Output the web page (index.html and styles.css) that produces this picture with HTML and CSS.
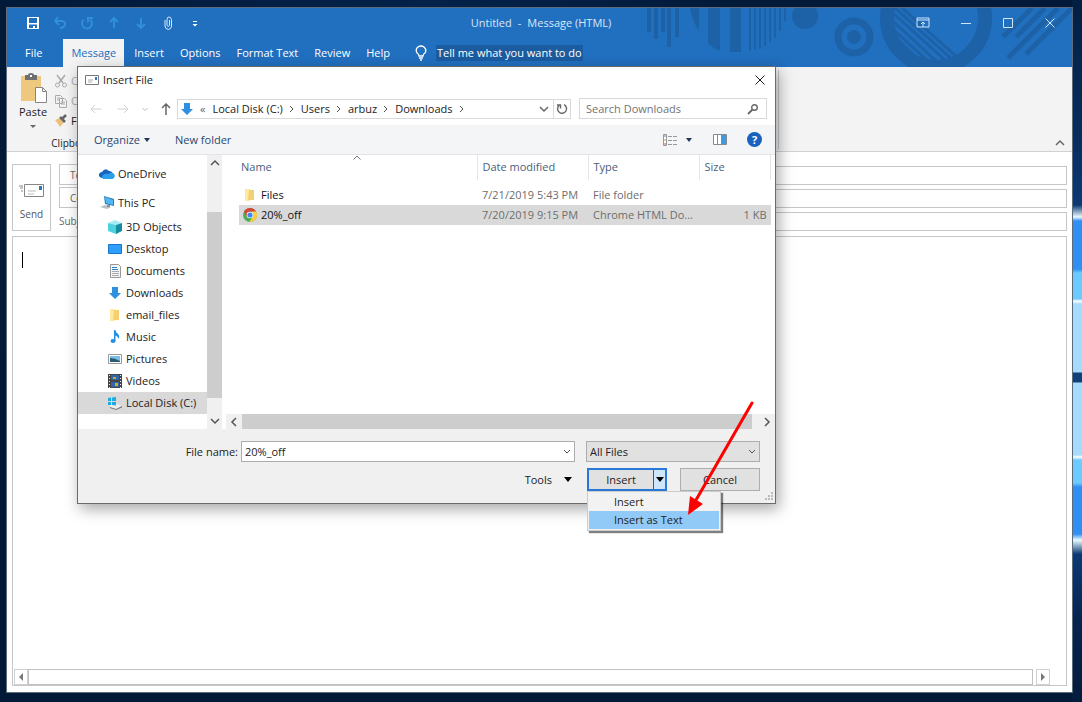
FILE: index.html
```html
<!DOCTYPE html>
<html lang="en">

<head>
    <meta charset="UTF-8" />
    <meta name="viewport" content="width=device-width, initial-scale=1.0" />
    <title>Untitled - Message (HTML)</title>
    <link rel="stylesheet" href="styles.css">
</head>

<body>
    <div class="window">
        <header class="header">
            <!-- Title bar pattern -->
            <svg class="header-art" width="432" height="60" viewBox="640 7 432 60" fill="#1d62a7">
                <path d="M647 7h4v24h-4zM654 7h4v31h-4zM661 7h4v24h-4zM667 7h4v39h-4zM675 7h4v29h-4z" />
                <path d="M690 7h9v23q-7-10-9-23zM708 7h12v43q-6-2-12-8zM730 7h11v44h-11z" />
                <path d="M749 7h2v43h-2zM754 7h2v42h-2zM759 7h2v41h-2zM764 7h2v38h-2zM769 7h2v34h-2zM774 7h2v30h-2zM779 7h2v23h-2zM784 7h2v13h-2z" />
                <circle cx="805" cy="15" r="13" />
                <circle cx="854" cy="36" r="16" fill="none" stroke="#1d62a7" stroke-width="7" />
                <circle cx="854" cy="36" r="7" />
                <circle cx="936" cy="17" r="49" fill="none" stroke="#1d62a7" stroke-width="14" />
                <path d="M894 13l52 47M894 21l43 40M896 31l34 31M899 40l22 21M895 7l60 54M902 7l56 50" stroke="#1d62a7" stroke-width="3" />
                <path d="M1003 36l29-29M1016 36l29-29M1008 57l50-50M1026 53l46-46" stroke="#1d62a7" stroke-width="5" />
            </svg>
            <div class="titlebar">
                <div class="quick-access">
                    <button aria-label="Save"><svg width="14" height="14" viewBox="0 0 14 14"><path d="M1 1h12v12H1zM3 2h8v5H3zM3 8.500h8V12H9v-2H7v2H3z" fill="#fff" fill-rule="evenodd" /></svg></button>
                    <button class="dim" aria-label="Undo"><svg width="14" height="14" viewBox="0 0 14 14"><path d="M5 1L2 5l4 4M2 5h6q5 0 4 4-1 3-5 3" /></svg></button>
                    <button class="dim" aria-label="Redo"><svg width="14" height="14" viewBox="0 0 14 14"><path d="M4 3.500A5 5 0 1 0 10 3.500M8 6.500V2h5" /></svg></button>
                    <button class="dim" aria-label="Previous"><svg width="14" height="14" viewBox="0 0 14 14"><path d="M7 12V2M3 6l4-4 4 4" /></svg></button>
                    <button class="dim" aria-label="Next"><svg width="14" height="14" viewBox="0 0 14 14"><path d="M7 2v10M3 8l4 4 4-4" /></svg></button>
                    <button aria-label="Attach file"><svg width="14" height="14" viewBox="0 0 14 14"><path d="M8.500 4v5.500q-1.500 2-2.500 0V3.500Q6 1 8 1t2.500 2.500V10q0 3-3 3.500Q4 13 4 10V4" fill="none" stroke="#dbe9f7" /></svg></button>
                    <button aria-label="Customize toolbar"><svg width="14" height="14" viewBox="0 0 14 14"><path d="M5 5h4v1H5zM4.500 8h5L7 10.500z" fill="#fff" /></svg></button>
                </div>
                <div class="window-title"><span>Untitled</span><span>-</span><span>Message (HTML)</span></div>
                <div class="window-controls">
                    <button aria-label="Ribbon display options"><svg width="14" height="12" viewBox="0 0 14 12"><path d="M1 1h12v9H1zM1 3h12M7 10V5M5 7l2-2 2 2" /></svg></button>
                    <button aria-label="Minimize"><svg width="12" height="12" viewBox="0 0 12 12"><path d="M1 6.500h10" /></svg></button>
                    <button aria-label="Maximize"><svg width="12" height="12" viewBox="0 0 12 12"><path d="M1.500 1.500h9v9h-9z" /></svg></button>
                    <button aria-label="Close window"><svg width="12" height="12" viewBox="0 0 12 12"><path d="M1.500 1.500l9 9M10.500 1.500l-9 9" /></svg></button>
                </div>
            </div>
            <nav class="tabs">
                <a href="#" class="tab tab-file">File</a>
                <a href="#" class="tab active">Message</a>
                <a href="#" class="tab">Insert</a>
                <a href="#" class="tab">Options</a>
                <a href="#" class="tab">Format Text</a>
                <a href="#" class="tab">Review</a>
                <a href="#" class="tab">Help</a>
                <svg class="bulb" width="12" height="16" viewBox="0 0 12 16" fill="none" stroke="#fff" stroke-width="1.300"><path d="M4 11Q4 9 2 8 0 4 3 2 6 0 9 2q3 3 1 6-2 1-2 3zM4 13h4M5 15h2" /></svg>
                <a href="#" class="tell-me">Tell me what you want to do</a>
            </nav>
        </header>

        <section class="ribbon">
            <div class="ribbon-groups">
                <div class="clipboard">
                    <div class="clipboard-tools">
                        <button class="paste">
                            <svg width="28" height="30" viewBox="0 0 28 30"><path d="M2 3h20v25H2z" fill="#edc87e" /><path d="M6 2h3q0-2 3-2t3 2h3v5H6z" fill="#6f6f6f" /><path d="M11 2h2v2h-2z" fill="#fff" /><path d="M16.500 14.500h7l4 4v11h-11zM23.500 14.500v4h4" fill="#fff" stroke="#868686" /></svg>
                            <span>Paste</span>
                            <svg width="6" height="4" viewBox="0 0 6 4"><path d="M0 0h6L3 3z" fill="#666" /></svg>
                        </button>
                        <div class="clipboard-list">
                            <button class="disabled"><svg width="14" height="14" viewBox="0 0 14 14" fill="none" stroke="#aaa"><path d="M3 1l6 8M11 1L5 9" stroke-width="1.500" /><circle cx="3.500" cy="11" r="2" /><circle cx="10.500" cy="11" r="2" /></svg>Cut</button>
                            <button class="disabled"><svg width="14" height="14" viewBox="0 0 14 14" fill="#f3f3f3" stroke="#aaa"><path d="M1.500 1.500h5l2 2v6h-7zM5.500 4.500h5l2 2v7h-7zM7 8h4M7 10h4M3 4h3M3 6h2" /></svg>Copy</button>
                            <button><svg width="14" height="14" viewBox="0 0 14 14"><path d="M1 6l5-2 4 4-4 5-2-3z" fill="#edc07a" /><path d="M6 3l5 5M8 5l4-4" stroke="#666" stroke-width="2.500" /></svg>Format Painter</button>
                        </div>
                    </div>
                    <div class="group-name">Clipboard</div>
                </div>
            </div>
            <button class="collapse" aria-label="Collapse the ribbon"><svg width="10" height="8" viewBox="0 0 10 8"><path d="M1 6l4-4 4 4" fill="none" stroke="#666" stroke-width="1.500" /></svg></button>
        </section>

        <main class="compose">
            <div class="address">
                <button class="send">
                    <svg width="26" height="15" viewBox="0 0 26 15"><path d="M5.500 1.500h19v12h-19z" fill="#fff" stroke="#868686" /><path d="M20 3h3v4h-3z" fill="#3178ba" /><path d="M9 8h8M9 11h6" stroke="#bbb" /><path d="M0 3h4M1 5h3M2 8h2" stroke="#888" /></svg>
                    Send
                </button>
                <div class="fields">
                    <div class="field"><button>To</button><input type="text" aria-label="To"></div>
                    <div class="field"><button>Cc</button><input type="text" aria-label="Cc"></div>
                    <div class="field"><label for="subject">Subject</label><input type="text" id="subject"></div>
                </div>
            </div>
            <div class="message">
                <span class="caret"></span>
                <textarea aria-label="Message body"></textarea>
                <div class="message-scroll">
                    <button aria-label="Scroll message left"><svg width="6" height="8" viewBox="0 0 6 8"><path d="M5 0v8L1 4z" fill="#777" /></svg></button>
                    <div class="message-track"></div>
                    <button aria-label="Scroll message right"><svg width="6" height="8" viewBox="0 0 6 8"><path d="M1 0v8l4-4z" fill="#777" /></svg></button>
                </div>
            </div>
        </main>
    </div>

    <!-- Insert File dialog -->
    <div class="dialog" role="dialog" aria-labelledby="dialogTitle">
        <div class="dialog-title">
            <svg width="14" height="10" viewBox="0 0 14 10"><path d="M.5.500h13v9H.5z" fill="#fff" stroke="#777" /><path d="M10 2h2v3h-2z" fill="#3178ba" /><path d="M3 5h5M3 7h4" stroke="#aaa" /></svg>
            <span id="dialogTitle">Insert File</span>
            <button aria-label="Close"><svg width="10" height="10" viewBox="0 0 10 10"><path d="M.5.500l9 9M9.500.500l-9 9" stroke="#222" /></svg></button>
        </div>

        <div class="dialog-nav">
            <div class="history">
                <button aria-label="Back"><svg width="12" height="12" viewBox="0 0 12 12"><path d="M11.500 6H1M5 2L1 6l4 4" stroke="#d2d2d2" /></svg></button>
                <button aria-label="Forward"><svg width="12" height="12" viewBox="0 0 12 12"><path d="M.5 6H11M7 2l4 4-4 4" stroke="#d2d2d2" /></svg></button>
                <button aria-label="Recent locations"><svg width="6" height="12" viewBox="0 0 6 12"><path d="M.5 5L3 7.500 5.500 5" stroke="#bbb" /></svg></button>
                <button aria-label="Up"><svg width="10" height="12" viewBox="0 0 10 12"><path d="M5 12V1M1 5l4-4 4 4" stroke="#666" stroke-width="1.500" /></svg></button>
            </div>
            <div class="path">
                <svg width="14" height="14" viewBox="0 0 14 14"><path d="M4 1h6v6h3l-6 6-6-6h3z" fill="#2f8fe0" /></svg>
                <span class="path-more">«</span>
                <a href="#">Local Disk (C:)</a>
                <svg class="sep" width="6" height="8" viewBox="0 0 6 8"><path d="M1 1l3 3-3 3" /></svg>
                <a href="#">Users</a>
                <svg class="sep" width="6" height="8" viewBox="0 0 6 8"><path d="M1 1l3 3-3 3" /></svg>
                <a href="#">arbuz</a>
                <svg class="sep" width="6" height="8" viewBox="0 0 6 8"><path d="M1 1l3 3-3 3" /></svg>
                <a href="#">Downloads</a>
                <svg class="sep" width="6" height="8" viewBox="0 0 6 8"><path d="M1 1l3 3-3 3" /></svg>
                <button class="path-drop" aria-label="Previous locations"><svg width="10" height="8" viewBox="0 0 10 8"><path d="M1 2l4 4 4-4" fill="none" stroke="#666" stroke-width="1.500" /></svg></button>
                <button class="path-refresh" aria-label="Refresh"><svg width="12" height="12" viewBox="0 0 12 12"><path d="M8 1.700A4.500 4.500 0 1 1 3 2.500M1 2h3.500v3.500" fill="none" stroke="#666" stroke-width="1.400" /></svg></button>
            </div>
            <div class="search">
                <input type="text" placeholder="Search Downloads" aria-label="Search Downloads">
                <svg width="12" height="12" viewBox="0 0 12 12" fill="none" stroke="#666" stroke-width="1.400"><circle cx="7.500" cy="4.500" r="2.800" /><path d="M5.500 6.500L1 11" stroke-width="1.800" /></svg>
            </div>
        </div>

        <div class="dialog-toolbar">
            <button class="organize">Organize <svg width="6" height="4" viewBox="0 0 6 4"><path d="M0 0h6L3 4z" fill="#1e395b" /></svg></button>
            <button>New folder</button>
            <div class="view-tools">
                <button class="view" aria-label="Change your view"><svg width="14" height="12" viewBox="0 0 14 12"><path d="M.5.500h3v11h-3z" fill="#fff" stroke="#999" /><path d="M1 2h2" stroke="#478dc4" /><path d="M1 6h2" stroke="#c49b47" /><path d="M1 10h2" stroke="#c8523f" /><path d="M5 2.500h4M10 2.500h4M5 6.500h4M10 6.500h4M5 10.500h4M10 10.500h4" stroke="#999" /></svg></button>
                <button class="view-more" aria-label="More views"><svg width="6" height="4" viewBox="0 0 6 4"><path d="M0 0h6L3 4z" fill="#1e395b" /></svg></button>
                <button class="preview" aria-label="Show the preview pane"><svg width="14" height="12" viewBox="0 0 14 12"><path d="M.5.500h13v10H.5zM4.500 1v9" fill="#fff" stroke="#888" /><path d="M8 1h5v9H8z" fill="#3a9be6" /></svg></button>
                <button class="help" aria-label="Get help">?</button>
            </div>
        </div>

        <div class="browser">
            <div class="sidebar">
                <a href="#" class="root"><svg width="16" height="14" viewBox="0 0 16 14"><path d="M3 11q-4-1-3-4 1-2 3-2 3-5 7-1 3 0 4 3l-7 4z" fill="#1565c0" /><path d="M4 12q-2-2 0-4 3-2 6-1 1-2 4-1 3 2 1 5-1 1-2 1z" fill="#2aa0ec" /></svg>OneDrive</a>
                <a href="#" class="root"><svg width="16" height="14" viewBox="0 0 16 14"><path d="M5 0l10 3v7L6 8z" fill="#2a7db8" /><path d="M6 1l8 3v5L7 7z" fill="#4eb9f5" /><path d="M1 11l5-2 6 2-4 2z" fill="#b9bec4" /><path d="M8 9h3v2H8z" fill="#8b9299" /></svg>This PC</a>
                <a href="#"><svg width="14" height="14" viewBox="0 0 14 14"><path d="M0 3l7-3 7 3-6 2z" fill="#a5edf3" /><path d="M0 3l8 2v9l-8-3z" fill="#4fd0dd" /><path d="M8 5l6-2v8l-6 3z" fill="#148da3" /></svg>3D Objects</a>
                <a href="#"><svg width="14" height="14" viewBox="0 0 14 14"><path d="M.5 2.500h13v9H.5z" fill="#2f9dfa" stroke="#1776ca" /></svg>Desktop</a>
                <a href="#"><svg width="14" height="14" viewBox="0 0 14 14"><path d="M2.500.500h8l2 2v11h-10z" fill="#f5f5f5" stroke="#999" /><path d="M4 3.500h5M4 5.500h6" stroke="#2688c9" /><path d="M4 7.500h7M4 9.500h7M4 11.500h7" stroke="#aaa" /></svg>Documents</a>
                <a href="#"><svg width="14" height="14" viewBox="0 0 14 14"><path d="M4 1h6v6h3l-6 6-6-6h3z" fill="#2f8fe0" /></svg>Downloads</a>
                <a href="#"><svg width="14" height="14" viewBox="0 0 14 14"><path d="M2 1h5v12H2z" fill="#ffe9a2" /><path d="M6 2h5v10H5z" fill="#f5d071" /></svg>email_files</a>
                <a href="#"><svg width="14" height="14" viewBox="0 0 14 14"><path d="M6 0h1.500q0 2.500 2.500 4 2 2 .5 5Q10 6 7.500 5.500V11H6z" fill="#2490e5" /><ellipse cx="5" cy="11" rx="2.500" ry="2" fill="#2490e5" /></svg>Music</a>
                <a href="#"><svg width="14" height="14" viewBox="0 0 14 14"><path d="M.5 2.500h13v9H.5z" fill="#fff" stroke="#999" /><path d="M2 4h10v6H2z" fill="#79bdea" /><path d="M2 6q5 0 10 3v1H2z" fill="#285c70" /></svg>Pictures</a>
                <a href="#"><svg width="14" height="14" viewBox="0 0 14 14"><path d="M0 0h14v14H0z" fill="#444" /><path d="M3 1h8v5H3zM3 8h8v5H3z" fill="#3165aa" /><path d="M5 3h3v2H5zM7 9h3v3H7z" fill="#d4a536" /><path d="M1.500 1v13M12.500 1v13" stroke="#eee" stroke-dasharray="1 2" /></svg>Videos</a>
                <a href="#" class="selected"><svg width="14" height="14" viewBox="0 0 14 14"><path d="M2 9l7-1 5 2-6 3-6-2z" fill="#eee" /><path d="M2 11l6 2 6-3v1.500L8 14l-6-2z" fill="#777" /><path d="M0 2l3-.5V5H0zM4 1.400L8 1v4H4zM0 6h3v3H0zM4 6h4v3.500L4 9z" fill="#19ade5" /></svg>Local Disk (C:)</a>
                <a href="#" class="network" aria-label="Network"><svg width="14" height="14" viewBox="0 0 14 14"><circle cx="7" cy="7" r="6" fill="#3b9fc7" /><path d="M3 4q4-3 8 1" stroke="#b7e0ee" fill="none" /></svg></a>
            </div>
            <div class="vscroll">
                <button aria-label="Scroll up"><svg width="10" height="8" viewBox="0 0 10 8"><path d="M1 6l4-4 4 4" /></svg></button>
                <div class="vthumb"></div>
                <button aria-label="Scroll down"><svg width="10" height="8" viewBox="0 0 10 8"><path d="M1 2l4 4 4-4" /></svg></button>
            </div>
            <div class="files">
                <table>
                    <thead>
                        <tr>
                            <th class="col-name">Name<svg width="8" height="5" viewBox="0 0 8 5"><path d="M.5 4.500L4 1l3.500 3.500" fill="none" stroke="#777" /></svg></th>
                            <th class="col-date">Date modified</th>
                            <th class="col-type">Type</th>
                            <th class="col-size">Size</th>
                        </tr>
                    </thead>
                    <tbody>
                        <tr>
                            <td><div class="file"><svg width="14" height="14" viewBox="0 0 14 14"><path d="M2 1h5v12H2z" fill="#ffe9a2" /><path d="M6 2h5v10H5z" fill="#f5d071" /></svg>Files</div></td>
                            <td>7/21/2019 5:43 PM</td>
                            <td>File folder</td>
                            <td></td>
                        </tr>
                        <tr class="selected">
                            <td><div class="file"><svg width="14" height="14" viewBox="0 0 14 14"><circle cx="7" cy="7" r="7" fill="#4caf50" /><path d="M1 3.500A7 7 0 0 1 13.100 3.500H7L4 8.500z" fill="#db4437" /><path d="M13.100 3.500A7 7 0 0 1 6.500 14L10 8.500 9 3.500z" fill="#ffcd40" /><circle cx="7" cy="7" r="3.300" fill="#fff" /><circle cx="7" cy="7" r="2.600" fill="#4285f4" /></svg>20%_off</div></td>
                            <td>7/20/2019 9:15 PM</td>
                            <td>Chrome HTML Do...</td>
                            <td class="size">1 KB</td>
                        </tr>
                    </tbody>
                </table>
                <div class="hscroll">
                    <button aria-label="Scroll left"><svg width="8" height="10" viewBox="0 0 8 10"><path d="M6 1L2 5l4 4" /></svg></button>
                    <div class="hthumb"></div>
                    <button aria-label="Scroll right"><svg width="8" height="10" viewBox="0 0 8 10"><path d="M2 1l4 4-4 4" /></svg></button>
                </div>
            </div>
        </div>

        <div class="dialog-footer">
            <div class="name-row">
                <label for="fileName">File name:</label>
                <div class="combo">
                    <input type="text" id="fileName" value="20%_off">
                    <svg width="8" height="6" viewBox="0 0 8 6"><path d="M1 1l3 3 3-3" fill="none" stroke="#555" /></svg>
                </div>
                <div class="file-type">
                    <select aria-label="File type">
                        <option>All Files</option>
                    </select>
                    <svg width="8" height="6" viewBox="0 0 8 6"><path d="M1 1l3 3 3-3" fill="none" stroke="#555" /></svg>
                </div>
            </div>
            <div class="action-row">
                <button class="tools">Tools <svg width="8" height="5" viewBox="0 0 8 5"><path d="M0 0h8L4 5z" /></svg></button>
                <div class="split">
                    <button class="insert">Insert</button>
                    <button class="insert-more" aria-label="Insert options"><svg width="8" height="5" viewBox="0 0 8 5"><path d="M0 0h8L4 5z" /></svg></button>
                    <div class="insert-menu" role="menu">
                        <button role="menuitem">Insert</button>
                        <button role="menuitem" class="active">Insert as Text</button>
                    </div>
                </div>
                <button class="cancel">Cancel</button>
            </div>
            <svg class="grip" width="10" height="10" viewBox="0 0 10 10"><path d="M7 0h2v2H7zM7 3h2v2H7zM7 6h2v2H7zM4 3h2v2H4zM4 6h2v2H4zM1 6h2v2H1z" fill="#bbb" /></svg>
        </div>

        <svg class="arrow" width="70" height="118" viewBox="0 0 70 118"><path d="M65 2L9 99" stroke="#f00" stroke-width="3" stroke-linecap="round" /><path d="M1 114l2-19 13 8z" fill="#f00" /></svg>
    </div>
</body>

</html>
```

FILE: styles.css
```css
* {
    box-sizing: border-box;
}

html,
body {
    margin: 0;
    height: 100%;
}

body {
    position: relative;
    padding: 7px 9px 9px 6px;
    overflow: hidden;
    font-family: "Open Sans", "Noto Sans", sans-serif;
    font-size: 11px;
    line-height: 16px;
    color: #222;
    background:
        linear-gradient(#031f42 0, #082e5e 140px, #0b3a75 205px, #e8fbff 217px, #2e8ff5 221px, #2e8ff5 269px, #6bcbff 273px, #6bcbff 299px, #fff 301px, #a5dcfd 304px, #a5dcfd 372px, #103f7a 373px, #103f7a 382px, #a5dcfd 383px, #a5dcfd 455px, #fff 457px, #6bcbff 460px, #6bcbff 483px, #2e8ff5 487px, #2e8ff5 534px, #e8fbff 540px, #0b3a75 554px, #072450 620px, #041c3c 702px) right top / 10px 100% no-repeat,
        linear-gradient(90deg, #021a38, #04224a 40%, #031a38 70%, #03193a) top / 100% 50% no-repeat,
        #021a38;
}

button,
input,
select,
textarea {
    font: inherit;
    color: inherit;
    margin: 0;
    padding: 0;
    border: 0;
    border-radius: 0;
    background: none;
    outline: none;
}

a {
    color: inherit;
    text-decoration: none;
}

svg {
    display: block;
    flex: none;
}

.window {
    height: 100%;
    display: flex;
    flex-direction: column;
    background: #fff;
    border: 1px solid #5c6c7c;
}

/* Header */
.header {
    position: relative;
    overflow: hidden;
    background: #216fbf;
    color: #fff;
}

.header-art {
    position: absolute;
    top: 0;
    right: 0;
}

.titlebar,
.tabs {
    position: relative;
    display: flex;
    align-items: center;
}

.titlebar {
    height: 31px;
    padding-bottom: 2px;
}

.quick-access,
.window-controls {
    flex: 1;
    display: flex;
}

.quick-access {
    gap: 13px;
    padding-left: 19px;
}

.quick-access .dim svg {
    fill: none;
    stroke: #2f8fdb;
    stroke-width: 2;
}

.window-title {
    display: flex;
    gap: 6px;
    color: #d9e8f7;
}

.window-controls {
    justify-content: flex-end;
    align-items: center;
    gap: 30px;
    padding-right: 16px;
}

.window-controls svg {
    fill: none;
    stroke: #d3e6f8;
}

.tabs {
    height: 28px;
}

.tab {
    padding: 0 8px;
    line-height: 28px;
}

.tab-file {
    padding: 0 21px 0 18px;
}

.tab.active {
    margin-right: 2px;
    background: #f3f3f3;
    color: #216fbf;
}

.bulb {
    margin-left: 17px;
}

.tell-me {
    margin-left: 9px;
    background: #1b5ca0;
    padding: 0 1px;
}

/* Ribbon */
.ribbon {
    height: 85px;
    display: flex;
    justify-content: space-between;
    align-items: flex-end;
    background: #f3f3f3;
    border-bottom: 1px solid #d2d2d2;
}

.ribbon-groups {
    width: 772px;
    height: 79px;
    margin-bottom: 2px;
    border-right: 1px solid #c8c8c8;
}

.clipboard {
    width: 134px;
    padding-top: 3px;
}

.clipboard-tools {
    display: flex;
    gap: 7px;
    padding-left: 12px;
}

.paste {
    display: flex;
    flex-direction: column;
    align-items: center;
    gap: 1px;
}

.paste svg:last-child {
    margin-top: 4px;
}

.clipboard-list {
    margin-top: -2px;
}

.clipboard-list button {
    height: 20px;
    display: flex;
    align-items: center;
    gap: 3px;
    white-space: nowrap;
}

.clipboard-list .disabled {
    color: #aaa;
}

.group-name {
    padding-top: 4px;
    text-align: center;
    font-size: 10px;
}

.collapse {
    padding: 4px 7px;
}

/* Message form */
.compose {
    flex: 1;
    display: flex;
    flex-direction: column;
    gap: 5px;
    padding: 12px 5px 6px;
}

.address {
    display: flex;
    gap: 8px;
}

.send {
    width: 39px;
    height: 67px;
    display: flex;
    flex-direction: column;
    align-items: center;
    gap: 8px;
    padding-top: 18px;
    border: 1px solid #c6c6c6;
    color: #555;
    font-size: 10px;
}

.fields {
    flex: 1;
    display: flex;
    flex-direction: column;
    gap: 2px;
    font-size: 10px;
}

.field {
    height: 21px;
    display: flex;
    align-items: flex-end;
    gap: 8px;
    color: #666;
}

.field button {
    width: 48px;
    height: 21px;
    padding-left: 10px;
    text-align: left;
    border: 1px solid #c6c6c6;
}

.field label {
    width: 48px;
    line-height: 20px;
}

.field input {
    flex: 1;
    height: 19px;
    border: 1px solid #c6c6c6;
}

.message {
    position: relative;
    flex: 1;
    display: flex;
    flex-direction: column;
    border: 1px solid #c6c6c6;
}

.message textarea {
    flex: 1;
    resize: none;
    padding: 14px 10px;
}

.caret {
    position: absolute;
    top: 15px;
    left: 9px;
    width: 1px;
    height: 16px;
    background: #000;
}

.message-scroll {
    height: 16px;
    display: flex;
    padding: 0 16px 0 1px;
}

.message-scroll button {
    width: 14px;
    display: flex;
    align-items: center;
    justify-content: center;
    border: 1px solid #d0d0d0;
}

.message-track {
    flex: 1;
    margin-right: 3px;
    border: 1px solid #c0c0c0;
}

/* Insert File dialog */
.dialog {
    position: absolute;
    top: 66px;
    left: 77px;
    width: 699px;
    background: #fff;
    border: 1px solid #6b6b6b;
    box-shadow: 3px 5px 14px rgba(0, 0, 0, 0.35);
}

.dialog-title {
    height: 25px;
    display: flex;
    align-items: center;
    gap: 4px;
    padding: 0 10px 0 7px;
}

.dialog-title button {
    margin-left: auto;
}

.dialog-nav {
    height: 33px;
    display: flex;
    align-items: center;
    gap: 8px;
    padding: 0 8px 0 12px;
}

.history {
    display: flex;
    gap: 15px;
    width: 79px;
}

.history svg {
    fill: none;
}

.history button:nth-child(n + 3) {
    margin-left: -2px;
}

.path {
    flex: 1;
    height: 20px;
    display: flex;
    align-items: center;
    gap: 6px;
    padding-left: 2px;
    border: 1px solid #d9d9d9;
}

.path-more {
    margin-right: 1px;
    color: #666;
}

.sep {
    fill: none;
    stroke: #555;
}

.path-drop {
    margin-left: auto;
}

.path-refresh {
    height: 18px;
    margin-left: -2px;
    padding: 0 2px;
    border-left: 1px solid #d9d9d9;
}

.search {
    width: 188px;
    height: 21px;
    display: flex;
    align-items: center;
    padding: 0 7px 0 6px;
    border: 1px solid #d9d9d9;
}

.search input {
    flex: 1;
    min-width: 0;
}

.search input::placeholder {
    color: #737373;
    opacity: 1;
}

.dialog-toolbar {
    height: 30px;
    display: flex;
    align-items: center;
    gap: 25px;
    padding: 0 13px 0 16px;
    background: #f4f5f7;
    border-bottom: 1px solid #e2e4e7;
    color: #2b4770;
}

.organize {
    display: flex;
    align-items: center;
    gap: 4px;
}

.view-tools {
    margin-left: auto;
    display: flex;
    align-items: center;
}

.view-more {
    margin: 0 21px 0 9px;
}

.help {
    width: 15px;
    height: 15px;
    margin-left: 20px;
    border-radius: 50%;
    background: #1a62bd;
    color: #fff;
    font-weight: bold;
    line-height: 15px;
}

.browser {
    height: 274px;
    display: flex;
}

.sidebar {
    width: 129px;
    padding-top: 8px;
    overflow: hidden;
}

.sidebar a {
    height: 22px;
    display: flex;
    align-items: center;
    gap: 4px;
    padding-left: 30px;
    white-space: nowrap;
}

.sidebar .root {
    gap: 3px;
    padding-left: 21px;
}

.sidebar .root + .root {
    margin: 7px 0 2px;
}

.sidebar .selected {
    background: #d9d9d9;
}

.sidebar .network {
    height: 42px;
    padding-left: 25px;
}

.vscroll {
    width: 15px;
    display: flex;
    flex-direction: column;
    background: #f0f0f0;
}

.vscroll button,
.hscroll button {
    display: flex;
    align-items: center;
    justify-content: center;
}

.vscroll button {
    height: 16px;
}

.vscroll svg,
.hscroll svg {
    fill: none;
    stroke: #555;
    stroke-width: 1.5;
}

.vthumb {
    flex: 1;
    margin: 41px 0 15px;
    background: #cdcdcd;
}

.files {
    flex: 1;
    display: flex;
    flex-direction: column;
    justify-content: space-between;
    padding-left: 4px;
}

.files table {
    width: 532px;
    margin-left: 13px;
    table-layout: fixed;
    border-collapse: collapse;
    color: #6d6d6d;
}

.files th {
    position: relative;
    height: 25px;
    padding: 0 0 2px 5px;
    border-right: 1px solid #e5e5e5;
    color: #4c607a;
    font-weight: normal;
    text-align: left;
}

.files .col-name {
    width: 238px;
    padding-left: 2px;
}

.col-name svg {
    position: absolute;
    top: 0;
    left: 50%;
    margin-left: -5px;
}

.col-date,
.col-type {
    width: 111px;
}

.files tbody::before {
    content: "";
    display: block;
    height: 5px;
}

.files td {
    height: 20px;
    padding: 0 0 0 5px;
    white-space: nowrap;
}

.files td:first-child {
    padding-left: 4px;
}

.files .selected {
    background: #d9d9d9;
}

.files .size {
    padding-right: 4px;
    text-align: right;
}

.file {
    display: flex;
    align-items: center;
    gap: 4px;
    color: #111;
}

.hscroll {
    height: 15px;
    display: flex;
    background: #f0f0f0;
}

.hscroll button {
    width: 16px;
}

.hthumb {
    flex: 1;
    margin-right: 7px;
    background: #cdcdcd;
}

.dialog-footer {
    position: relative;
    height: 74px;
    padding: 12px 15px 0 0;
    background: #f0f0f0;
}

.name-row,
.action-row {
    display: flex;
    justify-content: flex-end;
    align-items: center;
}

.name-row label {
    margin-right: 3px;
}

.combo,
.file-type {
    position: relative;
    height: 21px;
}

.combo {
    width: 334px;
    margin-right: 11px;
}

.combo input,
.file-type select {
    width: 100%;
    height: 21px;
    padding: 0 20px 0 3px;
    border: 1px solid #adadad;
}

.combo input {
    background: #fff;
}

.combo svg,
.file-type svg {
    position: absolute;
    top: 8px;
    right: 4px;
    pointer-events: none;
}

.file-type {
    width: 174px;
}

.file-type select {
    appearance: none;
    background: #e1e1e1;
}

.action-row {
    margin-top: 6px;
}

.tools {
    display: flex;
    align-items: center;
    gap: 12px;
    margin-right: 15px;
}

.split {
    position: relative;
    width: 80px;
    height: 23px;
    display: flex;
    margin-right: 13px;
    border: 2px solid #2878d7;
    background: #e1e1e1;
}

.insert {
    flex: 1;
}

.insert-more {
    width: 12px;
    padding-left: 2px;
    border-left: 1px solid #555;
    background: #cde6f9;
}

.insert-menu {
    position: absolute;
    top: 21px;
    left: -2px;
    width: 134px;
    padding: 1px;
    background: #f2f2f2;
    border: 1px solid #ccc;
    box-shadow: 2px 2px 1px rgba(0, 0, 0, 0.5);
}

.insert-menu button {
    display: block;
    width: 100%;
    height: 18px;
    padding-left: 25px;
    text-align: left;
}

.insert-menu .active {
    background: #91c9f7;
}

.cancel {
    width: 80px;
    height: 23px;
    border: 1px solid #adadad;
    background: #e1e1e1;
}

.grip {
    position: absolute;
    right: 1px;
    bottom: 1px;
}

/* Pointer from the file list to the menu item */
.arrow {
    position: absolute;
    top: 334px;
    left: 609px;
    fill: none;
}
```
